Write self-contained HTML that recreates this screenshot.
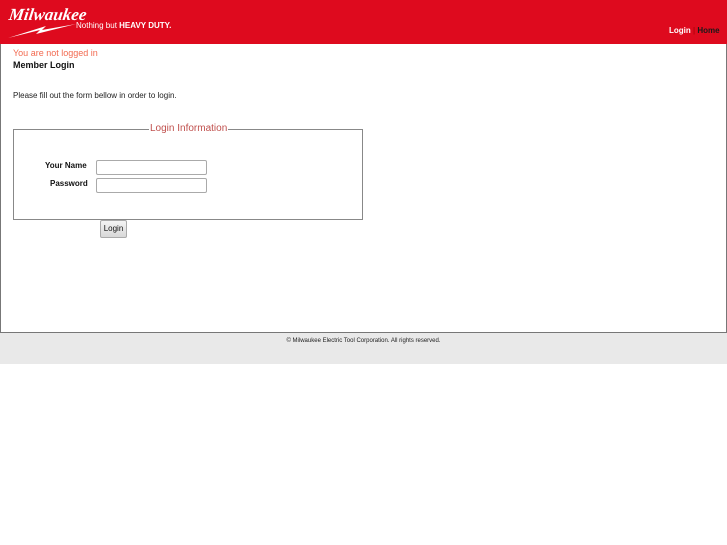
<!DOCTYPE html>
<html><head><meta charset="utf-8"><style>
*{margin:0;padding:0;box-sizing:border-box}
body{width:727px;height:545px;background:#fff;font-family:"Liberation Sans",sans-serif;font-size:8px;position:relative;overflow:hidden}
#wrap{position:absolute;left:0;top:0;width:727px;height:333px;border:1px solid #777;border-top:none}
#hdr{position:absolute;left:0;top:0;width:727px;height:44px;background:#de0a1e}
.abs{position:absolute;white-space:nowrap}
input.t{position:absolute;width:111px;height:15px;border:1px solid #aaa;border-radius:2px;background:#fff}
#foot{position:absolute;left:0;top:333px;width:727px;height:31px;background:#e9e9e9}
</style></head><body>
<div id="wrap"></div>
<div id="hdr">
<div class="abs" style="left:9px;top:5px;color:#fff;font:italic bold 17px 'Liberation Serif',serif;transform:skewX(-8deg)">Milwaukee</div>
<svg class="abs" style="left:6px;top:20px" width="70" height="20"><path d="M2 18 L40 6 L36 10 L70 4 L30 14 L34 10 Z" fill="#fff"/></svg>
<div class="abs" style="left:76px;top:21px;color:#fff;font-size:8px">Nothing but <b>HEAVY DUTY.</b></div>
<div class="abs" style="left:669px;top:26px;color:#fff;font-size:8px;font-weight:bold">Login <span style="color:#900;font-weight:normal">|</span> <span style="color:#1a1a1a">Home</span></div>
</div>
<div class="abs" style="left:13px;top:48px;color:#f26a50;font-size:9px">You are not logged in</div>
<div class="abs" style="left:13px;top:60px;font-weight:bold;font-size:9px;color:#111">Member Login</div>
<div class="abs" style="left:13px;top:91px;color:#222">Please fill out the form bellow in order to login.</div>
<div class="abs" style="left:13px;top:129px;width:350px;height:91px;border:1px solid #888"></div>
<div class="abs" style="left:149px;top:123px;background:#fff;padding:0 1px;color:#c0504d;font-size:10px">Login Information</div>
<div class="abs" style="left:45px;top:161px;font-weight:bold;color:#111">Your Name</div>
<div class="abs" style="left:50px;top:179px;font-weight:bold;color:#111">Password</div>
<input class="t" style="left:96px;top:160px">
<input class="t" style="left:96px;top:178px">
<div class="abs" style="left:100px;top:220px;width:27px;height:18px;border:1px solid #aaa;border-radius:2px;background:linear-gradient(#f4f4f4,#d8d8d8);text-align:center;line-height:16px;color:#111">Login</div>
<div id="foot"><div class="abs" style="left:0;width:727px;top:5px;text-align:center;font-size:6px;color:#222">© Milwaukee Electric Tool Corporation. All rights reserved.</div></div>
</body></html>
